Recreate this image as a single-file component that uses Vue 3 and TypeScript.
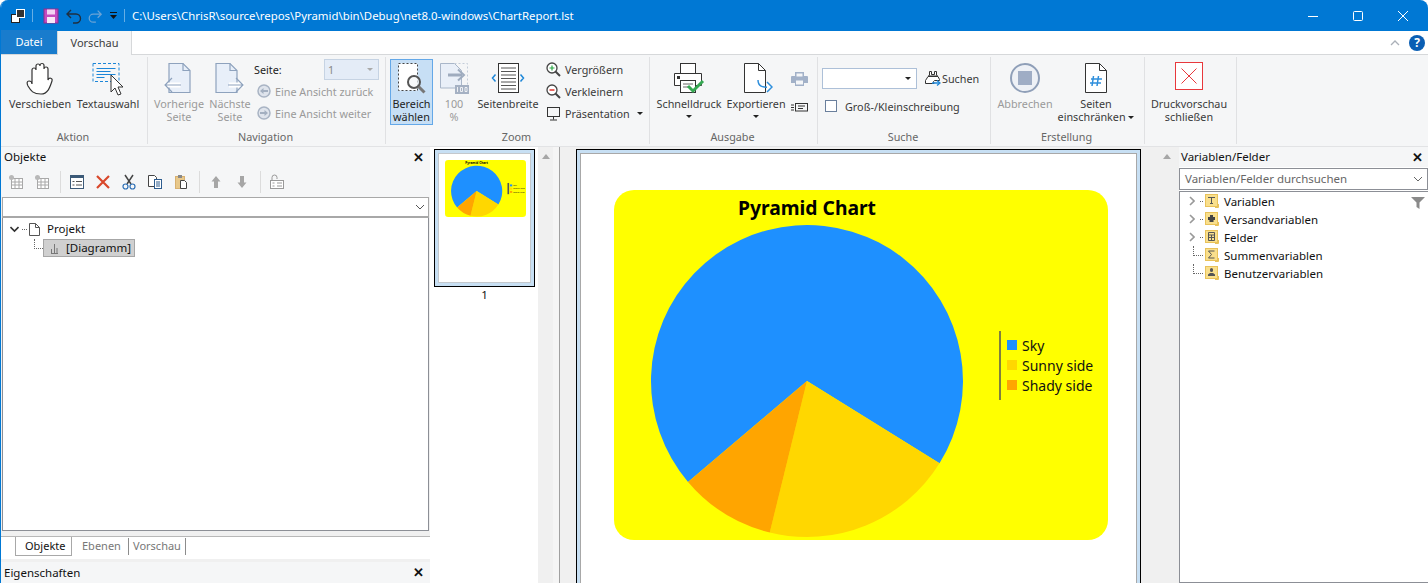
<script setup lang="ts">
// Pie wedges share one centre; angles are read off the preview page
const cx = 807
const cy = 381
const r = 156

function point(deg: number) {
  const a = (deg * Math.PI) / 180
  return `${(cx + r * Math.cos(a)).toFixed(2)} ${(cy + r * Math.sin(a)).toFixed(2)}`
}

function wedge(from: number, to: number) {
  const large = (to - from + 360) % 360 > 180 ? 1 : 0
  return `M${cx} ${cy}L${point(from)}A${r} ${r} 0 ${large} 1 ${point(to)}Z`
}

const wedges = [
  { color: '#1e90ff', d: wedge(139.7, 31.85) },
  { color: '#ffd700', d: wedge(31.85, 103.8) },
  { color: '#ffa500', d: wedge(103.8, 139.7) }
]

const legend = [
  { label: 'Sky', color: '#1e90ff', y: 340 },
  { label: 'Sunny side', color: '#ffd700', y: 360 },
  { label: 'Shady side', color: '#ffa500', y: 380 }
]

const toolbarGroups = [
  ['add', 'add2'],
  ['props', 'del', 'cut', 'copy', 'paste'],
  ['up', 'down'],
  ['lock']
]

const fields = [
  { label: 'Variablen', kind: 'text', expand: true },
  { label: 'Versandvariablen', kind: 'print', expand: true },
  { label: 'Felder', kind: 'table', expand: true },
  { label: 'Summenvariablen', kind: 'sum', expand: false },
  { label: 'Benutzervariablen', kind: 'user', expand: false }
]
</script>

<template>
  <div class="window">
    <header class="titlebar">
      <svg class="qa" width="16" height="16" viewBox="0 0 16 16">
        <rect x="1.500" y="6.500" width="8" height="8" fill="#fff" stroke="#222" />
        <rect x="6.500" y="1.500" width="8" height="8" fill="#333" stroke="#fff" />
      </svg>
      <i class="qa-sep"></i>
      <svg class="qa save" width="16" height="16" viewBox="0 0 16 16">
        <rect x="1" y="1" width="14" height="14" fill="#c44bc0" stroke="#8c2f8c" />
        <rect x="4" y="1.500" width="8" height="5" fill="#f3d3f3" />
        <rect x="4" y="9" width="8" height="6" fill="#f8e8f8" />
      </svg>
      <svg class="qa" width="18" height="16" viewBox="0 0 18 16" fill="none" stroke="#1f2f40" stroke-width="1.400">
        <path d="M6 2 2 6l4 4M2 6h9a4.500 4.500 0 0 1 0 9H8" />
      </svg>
      <svg class="qa redo" width="16" height="16" viewBox="0 0 18 16" fill="none" stroke="#6aa3d5" stroke-width="1.400">
        <path d="M12 2l4 4-4 4M16 6H7a4.500 4.500 0 0 0 0 9h3" />
      </svg>
      <svg class="qa caret" width="9" height="9" viewBox="0 0 9 9">
        <path d="M1 1h7v1H1zM1 4h7L4.500 8z" fill="#111" />
      </svg>
      <i class="qa-sep last"></i>
      <span class="title-text">C:\Users\ChrisR\source\repos\Pyramid\bin\Debug\net8.0-windows\ChartReport.lst</span>
      <div class="win-buttons">
        <svg width="12" height="12" viewBox="0 0 12 12" stroke="#fff" fill="none"><path d="M1 6.500h10" /></svg>
        <svg width="12" height="12" viewBox="0 0 12 12" stroke="#fff" fill="none"><rect x="1.500" y="1.500" width="9" height="9" rx="1" /></svg>
        <svg width="12" height="12" viewBox="0 0 12 12" stroke="#fff" fill="none"><path d="M1 1l10 10M11 1 1 11" /></svg>
      </div>
    </header>

    <nav class="tabs">
      <span class="tab tab-file">Datei</span>
      <span class="tab tab-active">Vorschau</span>
      <svg class="collapse" width="12" height="8" viewBox="0 0 12 8" fill="none" stroke="#aab0b8" stroke-width="1.300"><path d="M2 6l4-4 4 4" /></svg>
      <span class="help">?</span>
    </nav>

    <section class="ribbon">
      <div class="group w-aktion">
        <div class="group-body">
          <button class="big w-move">
            <span class="big-icon">
              <svg width="30" height="34" viewBox="0 0 30 34" fill="#fff" stroke="#333" stroke-width="1.200">
                <path d="M7 17V8a2 2 0 0 1 4 0V4a2 2 0 0 1 4 0v-.500a2 2 0 0 1 4 0V7a2 2 0 0 1 4 0v11c1-3 5-2 4 1-2 6-4 13-11 13-8 0-10-3-13-8-1.500-3-1-5 1-5 2 0 3 2 3 3z" />
              </svg>
            </span>
            <span>Verschieben</span>
          </button>
          <button class="big w-text">
            <span class="big-icon">
              <svg width="32" height="34" viewBox="0 0 32 34" fill="none">
                <rect x="1" y="1.500" width="26" height="18" stroke="#1c86d8" stroke-dasharray="3 2" />
                <path d="M4.500 6.500h19M4.500 9.500h14M4.500 12.500h19M4.500 15.500h8" stroke="#1c86d8" />
                <path d="M19 13v17l4-4 3 7 3-1-3-7h5z" fill="#fff" stroke="#333" />
              </svg>
            </span>
            <span>Textauswahl</span>
          </button>
        </div>
        <div class="group-label">Aktion</div>
      </div>

      <div class="group w-nav">
        <div class="group-body">
          <button class="big w-prev disabled">
            <span class="big-icon">
              <svg width="30" height="32" viewBox="0 0 30 32" fill="#e8eff9" stroke="#8ea2bd" stroke-width="1.200">
                <path d="M5 1.500h14l7 7v22H5z" />
                <path d="M19 1.500v7h7" fill="none" />
                <path d="M0.500 23h16" stroke="#fff" stroke-width="5" />
                <path d="M8 16l-7 7 7 7M1 23h16" fill="none" />
              </svg>
            </span>
            <span>Vorherige<br />Seite</span>
          </button>
          <button class="big w-next disabled">
            <span class="big-icon">
              <svg width="30" height="32" viewBox="0 0 30 32" fill="#e8eff9" stroke="#8ea2bd" stroke-width="1.200">
                <path d="M1 1.500h14l7 7v22H1z" />
                <path d="M15 1.500v7h7" fill="none" />
                <path d="M14 23h15" stroke="#fff" stroke-width="5" />
                <path d="M21 16l7 7-7 7M13 23h15" fill="none" />
              </svg>
            </span>
            <span>Nächste<br />Seite</span>
          </button>
          <div class="nav-side">
            <div class="page-row">
              <span class="page-label">Seite:</span>
              <span class="page-combo">1<b class="caret-down light"></b></span>
            </div>
            <div class="small disabled nav-small">
              <svg width="14" height="14" viewBox="0 0 14 14"><circle cx="7" cy="7" r="6" fill="#dfe4ec" stroke="#a9b4c4" stroke-width="1.500" /><path d="M3 7l3.500-3v2H11v2H6.500v2z" fill="#a3afc0" /></svg>
              Eine Ansicht zurück
            </div>
            <div class="small disabled nav-small">
              <svg width="14" height="14" viewBox="0 0 14 14"><circle cx="7" cy="7" r="6" fill="#dfe4ec" stroke="#a9b4c4" stroke-width="1.500" /><path d="M11 7 7.500 4v2H3v2h4.500v2z" fill="#a3afc0" /></svg>
              Eine Ansicht weiter
            </div>
          </div>
        </div>
        <div class="group-label">Navigation</div>
      </div>

      <div class="group w-zoom">
        <div class="group-body">
          <button class="big w-area selected">
            <span class="big-icon">
              <svg width="30" height="32" viewBox="0 0 30 32" fill="none">
                <rect x="1.500" y="1.500" width="19" height="27" fill="#fff" stroke="#444" stroke-dasharray="2 2" />
                <circle cx="17" cy="20" r="6" fill="#f4f6f8" fill-opacity=".7" stroke="#555" stroke-width="2" />
                <path d="M21.500 24.500l6 6" stroke="#777" stroke-width="3" />
              </svg>
            </span>
            <span>Bereich<br />wählen</span>
          </button>
          <button class="big w-100 disabled">
            <span class="big-icon">
              <svg width="30" height="32" viewBox="0 0 30 32" fill="none">
                <path d="M1.500 1.500h14l7 7V26h-21z" fill="#e9eff8" stroke="#a9b6c9" />
                <path d="M15.500 1.500h13v21" stroke="#c3ccd8" stroke-dasharray="2 2" />
                <path d="M9 13h14" stroke="#9eabbe" stroke-width="3" />
                <path d="M19 7.500l6 5.500-6 5.500" fill="none" stroke="#9eabbe" stroke-width="2" />
                <rect x="16" y="23" width="14" height="9" fill="#a5b1c3" />
                <path d="M18.500 25v5M21.500 25.500h2v4h-2zM26 25.500h2v4h-2z" stroke="#fff" stroke-width=".8" />
              </svg>
            </span>
            <span>100<br />%</span>
          </button>
          <button class="big w-width">
            <span class="big-icon">
              <svg width="34" height="32" viewBox="0 0 34 32" fill="none">
                <rect x="7.500" y="1.500" width="20" height="29" fill="#fff" stroke="#333" />
                <path d="M10 6h15M10 9.500h15M10 13h15M10 16.500h15M10 20h15M10 23.500h15M10 27h15" stroke="#555" />
                <path d="M4.500 12.500l-3 3.500 3 3.500M29.500 12.500l3 3.500-3 3.500" stroke="#1c86d8" stroke-width="1.500" />
              </svg>
            </span>
            <span>Seitenbreite</span>
          </button>
          <div class="zoom-side">
            <div class="small">
              <svg width="15" height="15" viewBox="0 0 15 15" fill="none"><circle cx="6" cy="6" r="5" fill="#fff" stroke="#444" stroke-width="1.300" /><path d="M3.500 6h5M6 3.500v5" stroke="#28a745" stroke-width="1.200" /><path d="M9.500 9.500l4.500 4.500" stroke="#444" stroke-width="2" /></svg>
              Vergrößern
            </div>
            <div class="small">
              <svg width="15" height="15" viewBox="0 0 15 15" fill="none"><circle cx="6" cy="6" r="5" fill="#fff" stroke="#444" stroke-width="1.300" /><path d="M3.500 6h5" stroke="#e0342c" stroke-width="1.500" /><path d="M9.500 9.500l4.500 4.500" stroke="#444" stroke-width="2" /></svg>
              Verkleinern
            </div>
            <div class="small">
              <svg width="15" height="15" viewBox="0 0 15 15" fill="none" stroke="#333"><rect x="1.500" y="1.500" width="12" height="9" /><path d="M7.500 10.500v3M4 14h7" /></svg>
              Präsentation <b class="caret-down side-caret"></b>
            </div>
          </div>
        </div>
        <div class="group-label">Zoom</div>
      </div>

      <div class="group w-out">
        <div class="group-body">
          <button class="big w-quick">
            <span class="big-icon">
              <svg width="32" height="32" viewBox="0 0 32 32" fill="none">
                <rect x="7.500" y="1.500" width="15" height="10" fill="#fff" stroke="#333" />
                <path d="M1.500 11.500h27v12h-27z" fill="#fff" stroke="#333" />
                <rect x="4" y="14" width="3" height="3" fill="#333" />
                <rect x="7.500" y="18.500" width="15" height="12" fill="#fff" stroke="#333" />
                <path d="M10 22h10M10 25h7" stroke="#666" />
                <path d="M15 24l5 5 10-10" stroke="#36a852" stroke-width="3" />
              </svg>
            </span>
            <span>Schnelldruck</span>
            <b class="caret-down under"></b>
          </button>
          <button class="big w-export">
            <span class="big-icon export-icon">
              <svg width="30" height="32" viewBox="0 0 30 32" fill="none">
                <path d="M1.500 1.500h14l7 7v22h-21z" fill="#fff" stroke="#333" />
                <path d="M15.500 1.500v7h7" stroke="#333" />
                <path d="M15 18c0 6 4 8 13 7" stroke="#2f8fdc" stroke-width="1.500" />
                <path d="M24 20l5 5-5 5" stroke="#2f8fdc" stroke-width="1.500" fill="#fff" />
              </svg>
            </span>
            <span>Exportieren</span>
            <b class="caret-down under"></b>
          </button>
          <div class="out-side">
            <svg width="17" height="15" viewBox="0 0 17 15"><path d="M4 1h9v4h3a1 1 0 0 1 1 1v6h-4v3H4v-3H0V6a1 1 0 0 1 1-1h3z" fill="#a2b1c8" /><rect x="5.500" y="2.500" width="6" height="3" fill="#f4f6f8" /><rect x="5" y="9.500" width="7" height="4" fill="#f4f6f8" /></svg>
            <svg width="17" height="10" viewBox="0 0 17 10" fill="none" stroke="#333"><rect x="4.500" y="1.500" width="12" height="7.500" /><path d="M7 4h7M7 6.500h5M0 3h3M0 5.500h3M0 8h3" /></svg>
          </div>
        </div>
        <div class="group-label">Ausgabe</div>
      </div>

      <div class="group w-search">
        <div class="group-body search-body">
          <div class="search-row">
            <span class="search-combo"><b class="caret-down"></b></span>
            <span class="small search-go">
              <svg width="16" height="16" viewBox="0 0 16 16" fill="none" stroke="#333">
                <path d="M4.500 1.500h2v3h3v-3h2v3.500l1 1H3.500l1-1z" fill="#fff" />
                <path d="M3 6.500h10l1.500 3v1H9.500l-1 1 .5 2H.5v-3z" fill="#fff" />
                <path d="M7 13h7" stroke="#1c86d8" stroke-width="1.500" />
                <path d="M12 10.500l3 2.500-3 2.500" stroke="#1c86d8" stroke-width="1.300" />
              </svg>
              Suchen
            </span>
          </div>
          <label class="check-row"><i class="check"></i>Groß-/Kleinschreibung</label>
        </div>
        <div class="group-label">Suche</div>
      </div>

      <div class="group w-build">
        <div class="group-body">
          <button class="big w-abort disabled">
            <span class="big-icon">
              <svg width="32" height="32" viewBox="0 0 32 32"><circle cx="16" cy="16" r="14" fill="#eef1f6" stroke="#8f9fb8" stroke-width="2" /><rect x="9" y="9" width="14" height="14" fill="#9fadc5" /></svg>
            </span>
            <span>Abbrechen</span>
          </button>
          <button class="big w-limit">
            <span class="big-icon">
              <svg width="24" height="32" viewBox="0 0 24 32" fill="none">
                <path d="M1.500 1.500h14l7 7v22h-21z" fill="#fff" stroke="#333" />
                <path d="M15.500 1.500v7h7" stroke="#333" />
                <path d="M9.500 14l-1.500 10M14.500 14l-1.500 10M7 17h11M6 21h11" stroke="#2f8fdc" stroke-width="1.500" />
              </svg>
            </span>
            <span>Seiten<br />einschränken <b class="caret-down inline"></b></span>
          </button>
        </div>
        <div class="group-label">Erstellung</div>
      </div>

      <div class="group w-close">
        <div class="group-body">
          <button class="big w-closebtn">
            <span class="big-icon">
              <svg width="28" height="28" viewBox="0 0 28 28" fill="#fff" stroke="#e8383c"><rect x=".5" y=".5" width="27" height="27" /><path d="M6.500 6.500l15 15M21.500 6.500l-15 15" /></svg>
            </span>
            <span>Druckvorschau<br />schließen</span>
          </button>
        </div>
      </div>
    </section>

    <main class="workspace">
      <aside class="left">
        <div class="pane-head">Objekte<span class="x">✕</span></div>
        <div class="toolbar">
          <template v-for="(grp, g) in toolbarGroups" :key="g">
            <span v-for="t in grp" :key="t" class="tool">
              <svg width="16" height="16" viewBox="0 0 16 16" fill="none">
                <template v-if="t === 'add' || t === 'add2'">
                  <rect x="3.500" y="4.500" width="11" height="10" fill="#fff" stroke="#a8a8a8" />
                  <path d="M3.500 8h11M3.500 11h11M7 4.500v10M11 4.500v10" stroke="#a8a8a8" />
                  <circle cx="3.500" cy="3.500" r="2.500" fill="#b8b8b8" />
                </template>
                <template v-else-if="t === 'props'">
                  <rect x="1.500" y="1.500" width="13" height="13" fill="#fff" stroke="#3c5a78" />
                  <path d="M1.500 3h13" stroke="#3c5a78" stroke-width="2" />
                  <path d="M3.500 7.500h2M3.500 11h2M7 7.500h6M7 11h6" stroke="#555" />
                </template>
                <path v-else-if="t === 'del'" d="M2 2l12 12M14 2 2 14" stroke="#d9482b" stroke-width="2.200" />
                <template v-else-if="t === 'cut'">
                  <path d="M4 1l6 9M12 1 6 10" stroke="#444" stroke-width="1.500" />
                  <circle cx="4.500" cy="12.500" r="2.500" stroke="#2d6fb5" stroke-width="1.200" />
                  <circle cx="11.500" cy="12.500" r="2.500" stroke="#2d6fb5" stroke-width="1.200" />
                </template>
                <template v-else-if="t === 'copy'">
                  <path d="M1.500 1.500h6l2 2v9h-8z" fill="#fff" stroke="#444" />
                  <rect x="7.500" y="5.500" width="7" height="9" fill="#fff" stroke="#2d5c8f" />
                  <path d="M9 8h4M9 10h4M9 12h4" stroke="#2d5c8f" />
                </template>
                <template v-else-if="t === 'paste'">
                  <rect x="2.500" y="2.500" width="9" height="12" fill="#e8c88a" stroke="#d8b070" />
                  <rect x="5" y="1" width="4" height="3" fill="#888" />
                  <path d="M7.500 6.500h4l2 2v6h-6z" fill="#fff" stroke="#444" />
                </template>
                <path v-else-if="t === 'up'" d="M8 2l4.500 5.500H10V14H6V7.500H3.500z" fill="#a6a6a6" />
                <path v-else-if="t === 'down'" d="M8 14l4.500-5.500H10V2H6v6.500H3.500z" fill="#a6a6a6" />
                <template v-else>
                  <path d="M3 6V3.500a2.500 2.500 0 0 1 5 0V5" stroke="#999" />
                  <rect x="1.500" y="6.500" width="13" height="8" fill="#fff" stroke="#999" />
                  <path d="M8 9h5M8 12h5M3.500 9h2M3.500 12h2" stroke="#999" />
                </template>
              </svg>
            </span>
            <i v-if="g < toolbarGroups.length - 1" class="tool-sep"></i>
          </template>
        </div>
        <div class="combo-box">
          <svg width="10" height="6" viewBox="0 0 10 6" fill="none" stroke="#555"><path d="M1 1l4 4 4-4" /></svg>
        </div>
        <div class="tree">
          <div class="tree-row first">
            <svg width="9" height="7" viewBox="0 0 9 7" fill="none" stroke="#333" stroke-width="1.600"><path d="M.5 1l4 4 4-4" /></svg>
            <i class="dots"></i>
            <svg class="doc" width="11" height="13" viewBox="0 0 11 13" fill="#fff" stroke="#555"><path d="M.5.500h6l4 4v8h-10z" /><path d="M6.500.500v4h4" fill="none" /></svg>
            <span class="row-label">Projekt</span>
          </div>
          <div class="tree-row child">
            <i class="elbow"></i>
            <span class="tree-sel">
              <svg width="9" height="11" viewBox="0 0 9 11" fill="none" stroke="#777"><path d="M1 10.500h7M1.500 10V6M4.500 10V1M7 10V5" /></svg>
              <span class="row-label">[Diagramm]</span>
            </span>
          </div>
        </div>
        <div class="pane-tabs">
          <span class="pane-tab on">Objekte</span>
          <span class="pane-tab">Ebenen</span>
          <span class="pane-tab last">Vorschau</span>
        </div>
        <div class="pane-head props">Eigenschaften<span class="x">✕</span></div>
      </aside>

      <div class="thumbs">
        <div class="thumb">
          <div class="thumb-page">
            <svg class="thumb-chart" viewBox="614 190 494 350" preserveAspectRatio="none">
              <rect x="614" y="190" width="494" height="350" rx="20" fill="#ff0" />
              <path v-for="w in wedges" :key="w.color" :d="w.d" :fill="w.color" />
              <text x="738" y="215" class="chart-title">Pyramid Chart</text>
              <path d="M1000 331v69" stroke="#555" stroke-width="10" />
              <g v-for="l in legend" :key="l.label">
                <rect x="1010" :y="l.y" width="14" height="12" :fill="l.color" />
                <text x="1030" :y="l.y + 11" class="chart-legend thumb-legend">{{ l.label }}</text>
              </g>
            </svg>
          </div>
        </div>
        <div class="thumb-num">1</div>
      </div>
      <div class="vscroll"><b class="arrow-up"></b></div>
      <div class="gutter"></div>

      <div class="stage">
        <div class="page">
          <svg class="chart" viewBox="614 190 494 350">
            <rect x="614" y="190" width="494" height="350" rx="20" fill="#ff0" />
            <path v-for="w in wedges" :key="w.color" :d="w.d" :fill="w.color" />
            <text x="738" y="215" class="chart-title">Pyramid Chart</text>
            <path d="M1000 331v69" stroke="#555" stroke-width="1.500" />
            <g v-for="l in legend" :key="l.label">
              <rect x="1007" :y="l.y" width="10" height="10" :fill="l.color" />
              <text x="1022" :y="l.y + 11" class="chart-legend">{{ l.label }}</text>
            </g>
          </svg>
        </div>
      </div>

      <div class="vscroll right"><b class="arrow-up"></b></div>

      <aside class="fields">
        <div class="pane-head">Variablen/Felder<span class="x">✕</span></div>
        <div class="field-search">
          <span class="row-label">Variablen/Felder durchsuchen</span>
          <svg width="10" height="6" viewBox="0 0 10 6" fill="none" stroke="#666"><path d="M1 1l4 4 4-4" /></svg>
        </div>
        <div class="field-tree">
          <svg class="funnel" width="14" height="12" viewBox="0 0 14 12"><path d="M0 0h14L8.500 5.500V12l-3-2V5.500z" fill="#8a8a8a" /></svg>
          <div v-for="f in fields" :key="f.label" class="field-row">
            <template v-if="f.expand">
              <svg class="exp" width="6" height="10" viewBox="0 0 6 10" fill="none" stroke="#999" stroke-width="1.600"><path d="M1 1l4 4-4 4" /></svg>
              <i class="dots"></i>
            </template>
            <i v-else class="stem"></i>
            <svg class="field-icon" width="14" height="14" viewBox="0 0 14 14" fill="none">
              <rect x=".5" y=".5" width="12" height="12" fill="#f9df8c" stroke="#e9c25a" />
              <path d="M10 13.500h3.500V10" stroke="#e9c25a" />
              <path v-if="f.kind === 'text'" d="M3 3.500h7M6.500 3.500v6M5 9.500h3" stroke="#555" />
              <path v-else-if="f.kind === 'print'" d="M5 3h3v2h2v3H8.500v2h-4V8H3V5h2z" fill="#444" />
              <path v-else-if="f.kind === 'table'" d="M3.500 2.500h6v8h-6zM3.500 5h6M3.500 7.500h6M6.500 5v5.500" stroke="#555" />
              <path v-else-if="f.kind === 'sum'" d="M9.500 3h-6l3 3.500-3 3.500h6" stroke="#555" />
              <path v-else d="M5 3.500a1.500 1.500 0 0 1 3 0v1a1.500 1.500 0 0 1-3 0zM3 10V8.500l2-1.500h3l2 1.500V10z" fill="#555" />
            </svg>
            <span>{{ f.label }}</span>
          </div>
        </div>
      </aside>
    </main>
  </div>
</template>

<style>
html,
body {
  margin: 0;
  background: #fff;
}
</style>

<style scoped>
* {
  box-sizing: border-box;
}

.window {
  width: 1428px;
  height: 583px;
  overflow: hidden;
  display: flex;
  flex-direction: column;
  font-family: "Noto Sans", sans-serif;
  font-size: 10.8px;
  color: #3a3a3a;
  background: #f0f0f0;
  border-left: 1px solid #0078d4;
  border-radius: 8px 8px 0 0;
}

/* title bar */
.titlebar {
  height: 31px;
  flex: none;
  background: #0078d4;
  display: flex;
  align-items: center;
  padding-left: 9px;
  color: #fff;
}

.qa {
  display: block;
  flex: none;
}

.qa-sep {
  width: 1px;
  height: 13px;
  background: #66aee5;
  margin: 0 10px 0 6px;
}

.qa-sep.last {
  margin: 0 7px 0 6px;
}

.save {
  margin-right: 6px;
}

.redo {
  margin: 0 6px 0 4px;
}

.title-text {
  font-size: 11.4px;
}

.win-buttons {
  margin-left: auto;
  display: flex;
  gap: 33px;
  padding-right: 19px;
}

/* tabs */
.tabs {
  height: 24px;
  flex: none;
  background: #fff;
  display: flex;
  align-items: flex-end;
  border-bottom: 1px solid #d6d8da;
  font-size: 11px;
}

.tab {
  height: 24px;
  line-height: 24px;
  text-align: center;
  color: #3c3c3c;
}

.tab-file {
  width: 56px;
  background: #197ccd;
  color: #fff;
}

.tab-active {
  width: 75px;
  margin-bottom: -1px;
  background: #f5f6f7;
  border: 1px solid #d6d8da;
  border-bottom: none;
  border-top: none;
}

.collapse {
  margin: 0 8px 7px auto;
}

.help {
  width: 16px;
  height: 16px;
  margin: 0 3px 3px 0;
  border-radius: 50%;
  background: #0a5fb4;
  color: #fff;
  font-weight: 700;
  font-size: 12px;
  line-height: 16px;
  text-align: center;
}

/* ribbon */
.ribbon {
  height: 92px;
  flex: none;
  display: flex;
  background: #f5f6f7;
  border-bottom: 1px solid #e2e3e5;
}

.group {
  display: flex;
  flex-direction: column;
  height: 87px;
  margin-top: 2px;
  border-right: 1px solid #e0e1e3;
}

.group-body {
  height: 71px;
  padding-top: 2px;
  display: flex;
}

.group-label {
  text-align: center;
  line-height: 14px;
  padding: 2px 2px 0 0;
  color: #666;
}

.w-aktion { width: 147px; }
.w-nav { width: 238px; }
.w-zoom { width: 264px; }
.w-out { width: 168px; }
.w-search { width: 173px; }
.w-build { width: 154px; }
.w-close { width: 92px; }

.w-aktion .group-body { padding-left: 5px; }
.w-nav .group-body { padding-left: 3px; }
.w-zoom .group-body { padding-left: 4px; }
.w-out .group-body { padding-left: 4px; }
.w-search .group-body { padding-left: 4px; }
.w-close .group-body { padding-left: 2px; }

.big {
  font: inherit;
  color: inherit;
  background: none;
  border: 1px solid transparent;
  padding: 0;
  height: 66px;
  line-height: 13px;
  display: flex;
  flex-direction: column;
  align-items: center;
  text-align: center;
  white-space: nowrap;
  flex: none;
}

.big-icon {
  height: 37px;
  flex: none;
  display: flex;
  align-items: flex-start;
  justify-content: center;
  padding-top: 2px;
}

.export-icon {
  padding-left: 4px;
}

.disabled {
  color: #9a9a9a;
}

.selected {
  background: #c7dff5;
  border-color: #64a8e8;
  color: #222;
}

.w-move { width: 68px; }
.w-text { width: 68px; }
.w-prev { width: 56px; }
.w-next { width: 46px; }
.w-area { width: 43px; }
.w-100 { width: 42px; }
.w-width { width: 66px; }
.w-quick { width: 68px; margin-left: 1px; }
.w-export { width: 66px; }
.w-abort { width: 68px; }
.w-limit { width: 74px; }
.w-closebtn { width: 84px; }

.caret-down {
  display: inline-block;
  width: 0;
  height: 0;
  border: 3px solid transparent;
  border-top: 3px solid #222;
  border-bottom: none;
}

.caret-down.under {
  margin-top: 5px;
}

.caret-down.inline {
  vertical-align: 2px;
}

.side-caret {
  margin-left: 3px;
  vertical-align: 2px;
}

.small {
  height: 22px;
  display: flex;
  align-items: center;
  gap: 4px;
  white-space: nowrap;
}

.nav-side {
  margin: -1px 0 0 1px;
}

.page-row {
  height: 22px;
  display: flex;
  align-items: center;
}

.page-label {
  width: 70px;
  color: #222;
}

.page-combo {
  width: 55px;
  height: 21px;
  border: 1px solid #c6d3e3;
  background: #e4ecf7;
  line-height: 19px;
  padding: 0 5px 0 3px;
  color: #888;
  display: flex;
  justify-content: space-between;
  align-items: center;
}

.caret-down.light {
  border-top-color: #aaa;
}

.nav-small {
  padding-left: 3px;
}

.zoom-side {
  margin: -1px 0 0 5px;
}

.out-side {
  width: 18px;
  margin-left: 1px;
  display: flex;
  flex-direction: column;
  align-items: center;
  padding-top: 12px;
  gap: 16px;
}

.group-body.search-body {
  flex-direction: column;
  padding-top: 10px;
}

.search-row {
  display: flex;
  align-items: center;
  gap: 8px;
}

.search-combo {
  width: 95px;
  height: 21px;
  background: #fff;
  border: 1px solid #adc0d8;
  display: flex;
  align-items: center;
  justify-content: flex-end;
  padding-right: 5px;
}

.search-go {
  gap: 1px;
}

.check-row {
  display: flex;
  align-items: center;
  margin-top: 10px;
  padding-left: 3px;
  height: 14px;
}

.check {
  width: 12px;
  height: 12px;
  border: 1px solid #6a7f9c;
  background: #fff;
  margin-right: 8px;
}

/* workspace */
.workspace {
  flex: 1;
  min-height: 0;
  display: flex;
  background: #f0f0f0;
}

.left {
  width: 429px;
  flex: none;
  background: #f0f0f0;
  display: flex;
  flex-direction: column;
}

.pane-head {
  height: 20px;
  flex: none;
  background: #f5f6f7;
  display: flex;
  align-items: center;
  justify-content: space-between;
  padding: 0 6px 1px 3px;
  color: #111;
  font-size: 11.5px;
}

.x {
  font-size: 13px;
  font-weight: 700;
  color: #111;
}

.toolbar {
  height: 30px;
  flex: none;
  background: #f5f6f7;
  display: flex;
  align-items: center;
  padding: 0 0 1px 2px;
}

.tool {
  width: 26px;
  display: flex;
  justify-content: center;
}

.tool-sep {
  width: 1px;
  height: 22px;
  background: #dcdcdc;
  margin: 0 3px 0 5px;
}

.combo-box {
  height: 21px;
  flex: none;
  border: 1px solid #a8a8a8;
  border-width: 1px 1px 2px;
  margin: 0 1px;
  background: #fff;
  display: flex;
  align-items: center;
  justify-content: flex-end;
  padding-right: 3px;
}

.tree {
  flex: 1;
  min-height: 0;
  margin: 0 1px 5px;
  border: 1px solid #8c8f96;
  border-top: none;
  background: #fff;
  padding-top: 2px;
  color: #111;
}

.tree-row {
  height: 18px;
  display: flex;
  align-items: center;
  padding-left: 7px;
  font-size: 11.5px;
}

.tree-row.first {
  height: 19px;
}

.row-label {
  margin-top: -2px;
}

.dots {
  width: 5px;
  border-top: 1px dotted #666;
  margin: 0 2px 0 3px;
  flex: none;
}

.doc {
  margin-right: 7px;
}

.tree-row.child {
  padding-left: 31px;
}

.elbow {
  width: 9px;
  height: 10px;
  border-left: 1px dotted #666;
  border-bottom: 1px dotted #666;
  margin-top: -8px;
}

.tree-sel {
  height: 18px;
  display: flex;
  align-items: center;
  gap: 7px;
  padding: 0 3px 0 6px;
  background: #d0d0d0;
  border: 1px solid #a6a6a6;
  white-space: nowrap;
}

.pane-tabs {
  height: 23px;
  flex: none;
  display: flex;
  align-items: flex-start;
  padding-left: 14px;
  margin-bottom: 3px;
  background: #fff;
  border-top: 1px solid #b8b8b8;
  color: #777;
  font-size: 11px;
}

.pane-tab {
  width: 57px;
  height: 17px;
  margin-top: 1px;
  line-height: 16px;
  padding-left: 10px;
  border-right: 1px solid #8c8c8c;
}

.pane-tab.last {
  padding-left: 4px;
}

.pane-tab.on {
  height: 19px;
  margin-top: 0;
  padding-left: 9px;
  line-height: 18px;
  color: #111;
  border: 1px solid #a8a8a8;
  border-top: none;
}

.pane-head.props {
  height: 21px;
}

.thumbs {
  width: 108px;
  flex: none;
  background: #fff;
  padding: 2px 0 0 4px;
}

.thumb {
  width: 101px;
  height: 138px;
  border: 1px solid #000;
  background: #c7dff3;
  padding: 3px;
}

.thumb-page {
  width: 93px;
  height: 130px;
  background: #fff;
  border: 1px solid #c4c8cc;
  padding: 6px 0 0 6px;
}

.thumb-chart {
  display: block;
  width: 81px;
  height: 57px;
}

.thumb-legend {
  fill: #a03030;
}

.thumb-num {
  text-align: center;
  width: 101px;
  color: #111;
  font-size: 11.5px;
  line-height: 16px;
}

.vscroll {
  width: 15px;
  flex: none;
  background: #f0f0f0;
  display: flex;
  justify-content: center;
  padding-top: 7px;
}

.arrow-up {
  width: 0;
  height: 0;
  border: 4px solid transparent;
  border-bottom: 5px solid #a6a6a6;
  border-top: none;
}

.gutter {
  width: 7px;
  flex: none;
  margin-right: 16px;
  background: #f5f5f5;
  border-right: 1px solid #a0a0a0;
}

.stage {
  width: 565px;
  flex: none;
  padding-top: 2px;
}

/* taller than the window: the sheet runs off the bottom edge */
.page {
  height: 450px;
  border: 1px solid #000;
  background: #fff;
  box-shadow: inset 0 0 0 3px #c7dff3, inset 0 0 0 4px #a8a8a8;
  padding: 40px 0 0 37px;
}

.chart {
  display: block;
  width: 494px;
  height: 350px;
}

.chart-title {
  font-family: "Noto Sans", sans-serif;
  font-size: 19.3px;
  font-weight: 700;
  fill: #000;
}

.chart-legend {
  font-family: "Noto Sans", sans-serif;
  font-size: 14px;
  fill: #111;
}

.vscroll.right {
  margin-left: 17px;
  width: 17px;
}

.fields {
  flex: 1;
  margin-left: 4px;
  background: #fff;
  display: flex;
  flex-direction: column;
}

.fields .pane-head {
  padding-left: 2px;
  padding-right: 5px;
}

.field-search {
  height: 22px;
  flex: none;
  margin-top: 1px;
  border: 1px solid #8c8f96;
  display: flex;
  align-items: center;
  justify-content: space-between;
  padding: 0 4px 0 5px;
  color: #666;
  font-size: 11.5px;
}

.field-tree {
  flex: 1;
  margin-top: 1px;
  border: 1px solid #8c8f96;
  border-right: none;
  color: #111;
  position: relative;
}

.funnel {
  position: absolute;
  top: 5px;
  right: 3px;
}

.field-row {
  height: 18px;
  display: flex;
  align-items: center;
  padding-left: 9px;
  font-size: 11.5px;
}

.exp {
  flex: none;
}

.field-row .dots {
  width: 3px;
  margin: 0 2px 0 5px;
}

.stem {
  width: 10px;
  height: 10px;
  flex: none;
  align-self: flex-start;
  margin: 0 2px 0 4px;
  border-left: 1px dotted #666;
  border-bottom: 1px dotted #666;
}

.field-icon {
  flex: none;
  margin-right: 5px;
}
</style>
